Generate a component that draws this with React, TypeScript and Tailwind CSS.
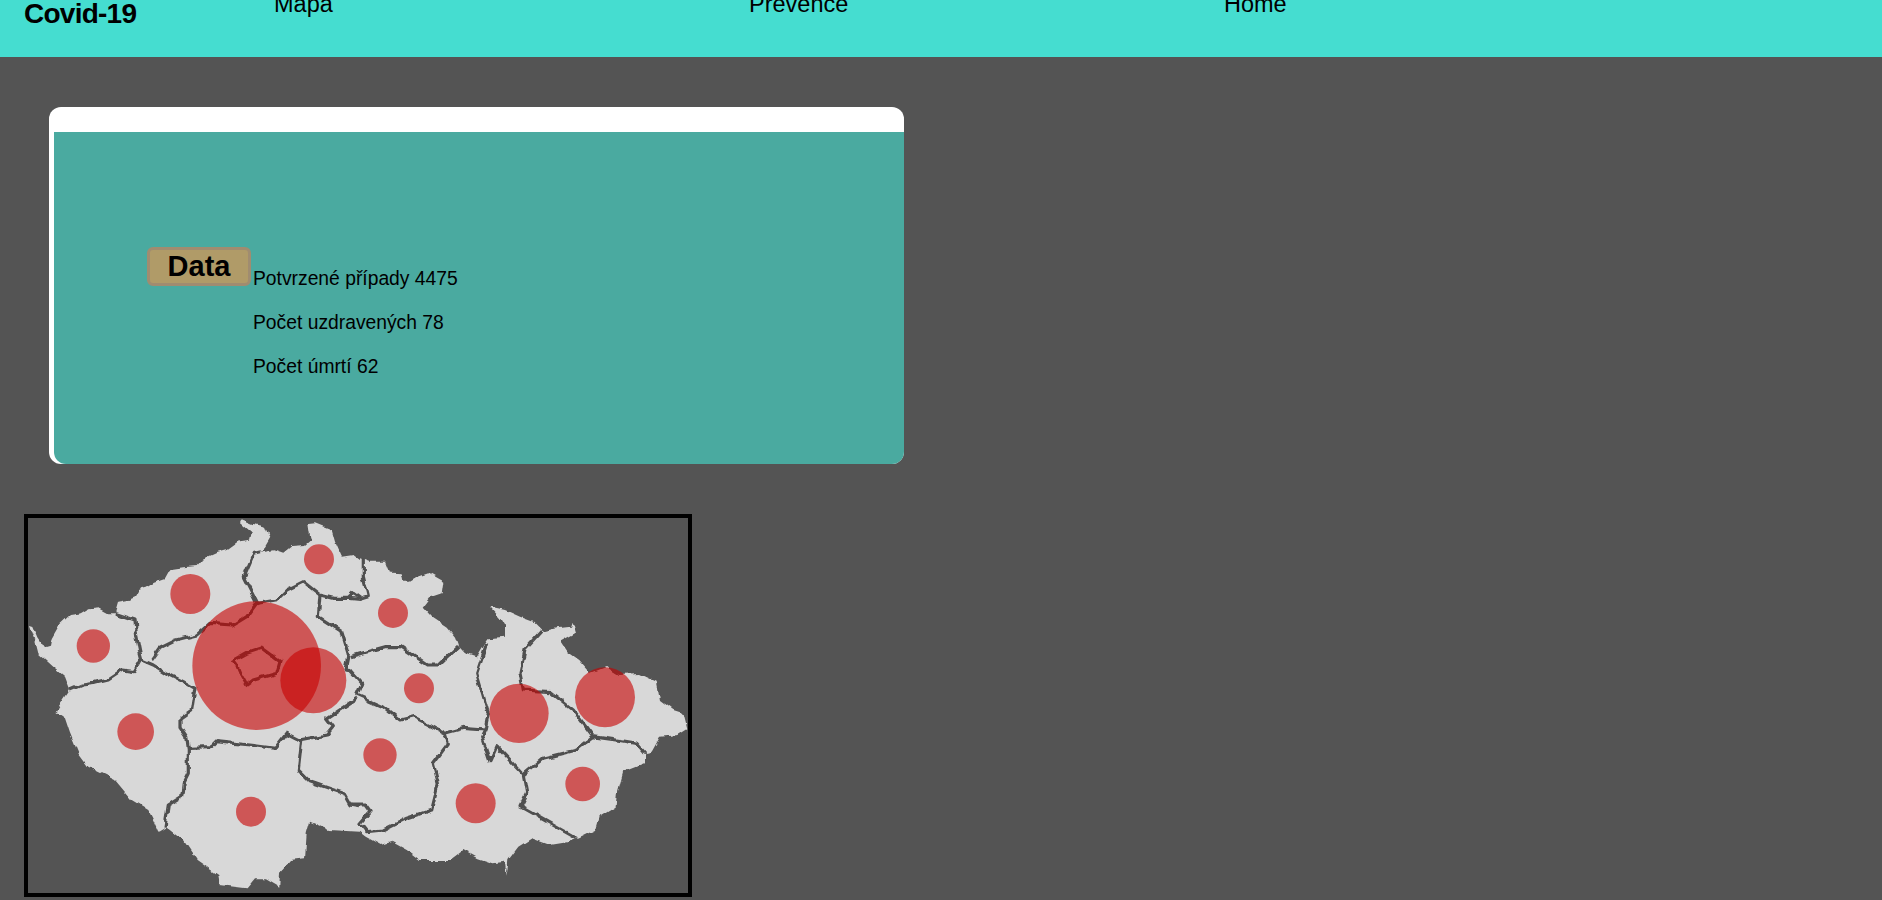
const west = (pts: number[][]) => pts.map(([x, y]) => [x / 3 + 20, y / 3 + 510]);
const east = (pts: number[][]) => pts.map(([x, y]) => [x / 3 + 350, y / 3 + 510]);
const toPath = (pts: number[][], close = false) =>
  "M" + pts.map(([x, y]) => `${x.toFixed(1)} ${y.toFixed(1)}`).join("L") + (close ? "Z" : "");

const outline = [
  ...west([[30,345],[40,348],[55,385],[75,415],[90,410],[95,385],[118,345],[150,315],[185,310],[205,298],[235,295],[262,310],[285,310],[295,275],[325,270],[345,262],[360,235],[385,228],[405,215],[435,205],[450,178],[490,172],[530,168],[548,148],[590,128],[620,120],[650,98],[690,92],[695,70],[660,40],[665,28],[700,42],[735,50],[745,75],[750,85],[735,110],[720,125],[760,118],[790,128],[815,108],[855,105],[872,90],[865,42],[885,40],[935,60],[945,95],[965,140],[1000,135],[1020,150]]),
  ...east([[30,145],[60,155],[105,155],[118,188],[155,190],[160,215],[180,215],[205,200],[235,190],[280,215],[275,250],[240,262],[218,290],[245,320],[290,350],[315,380],[325,408],[345,430],[380,442],[405,400],[415,385],[465,380],[465,350],[450,325],[420,290],[465,300],[510,320],[550,335],[580,365],[620,355],[660,350],[665,335],[675,370],[630,395],[650,425],[685,450],[720,490],[770,470],[810,495],[870,492],[920,515],[930,570],[970,600],[1000,610],[1012,658],[985,675],[930,680],[905,725],[885,730],[885,760],[820,785],[805,840],[800,890],[745,925],[735,960],[685,985],[660,995],[600,1005],[545,985],[505,1010],[475,1050],[470,1100],[465,1055],[430,1060],[385,1045],[340,1020],[300,1050],[210,1050],[170,1020],[125,995],[95,1005],[50,980],[30,965]]),
  ...west([[930,960],[870,935],[860,970],[855,1045],[810,1050],[780,1085],[778,1130],[735,1105],[705,1105],[680,1135],[600,1125],[595,1095],[530,1050],[490,990],[440,950],[415,965],[400,930],[385,900],[335,870],[285,810],[235,785],[205,770],[175,730],[150,670],[135,625],[108,605],[130,570],[150,540],[135,500],[100,470],[55,430],[45,390]]),
];

const borders = [
  west([[285,310],[345,330],[350,380],[360,430],[365,450],[345,485],[310,480],[265,510],[225,520],[185,525],[150,540]]),
  west([[365,450],[400,465],[440,490],[490,515],[525,535],[515,600],[480,625],[480,650],[500,680],[505,715],[505,790],[490,820],[485,860],[445,885],[435,950]]),
  west([[395,450],[420,415],[470,390],[530,375],[570,340],[640,345],[680,320],[710,280],[670,200],[700,130],[720,125]]),
  west([[505,712],[575,710],[590,695],[640,700],[690,705],[765,715],[800,670],[840,690],[920,675],[940,650],[920,625],[1010,565]]),
  west([[710,280],[770,270],[800,240],[850,215],[900,255],[940,265],[985,265],[1000,250],[1020,265]]),
  west([[900,255],[895,320],[965,365],[985,430],[975,480],[990,482]]),
  west([[845,690],[835,780],[870,815],[970,850],[990,885],[1020,890]]),
  east([[0,440],[50,425],[105,410],[150,410],[230,465],[265,465],[325,408]]),
  east([[40,145],[40,200],[55,260],[30,268],[0,265]]),
  east([[0,480],[35,520],[20,555],[100,590],[150,630],[190,620],[285,670],[340,655],[405,660],[415,610],[380,490],[410,400]]),
  east([[285,670],[295,700],[250,760],[265,820],[245,900],[170,925],[100,960],[50,965],[30,940],[60,905],[45,885],[0,885]]),
  east([[405,660],[395,680],[420,755],[440,710],[520,795],[580,745],[680,720],[730,680]]),
  east([[575,365],[525,420],[510,490],[520,540],[600,545],[670,600],[730,680],[800,690],[860,700],[885,730]]),
  east([[520,795],[530,850],[510,890],[600,940],[680,985]]),
];

const prague = west([[640,452],[680,430],[725,415],[780,455],[770,490],[700,510],[680,525],[660,490],[650,465]]);

const dots = [
  ...west([[220,408],[511,252],[897,148],[710,467],[880,511],[347,665],[693,905]]).map(([x, y], i) => ({ x, y, r: [50,60,45,193,99,55,45][i] / 3 })),
  ...east([[129,309],[207,535],[90,735],[377,880],[507,610],[765,562],[698,822]]).map(([x, y], i) => ({ x, y, r: [45,45,50,60,89,90,52][i] / 3 })),
];

function CzechMap() {
  return (
    <svg viewBox="28 518 660 375" className="block w-[660px] h-[375px]">
      <defs>
        {/* roughens the straight segments into a hand-traced border */}
        <filter id="rough" filterUnits="userSpaceOnUse" x="28" y="518" width="660" height="375">
          <feTurbulence type="fractalNoise" baseFrequency="0.09" numOctaves="2" seed="4" />
          <feDisplacementMap in="SourceGraphic" scale="6" xChannelSelector="R" yChannelSelector="G" />
          <feGaussianBlur stdDeviation="0.5" />
        </filter>
      </defs>
      <g filter="url(#rough)">
        <path d={toPath(outline, true)} fill="#d8d8d8" />
        {borders.map((b, i) => (
          <path key={i} d={toPath(b)} fill="none" stroke="#505050" strokeWidth="3.2" strokeLinejoin="round" />
        ))}
        <path d={toPath(prague, true)} fill="none" stroke="#505050" strokeWidth="3.2" />
      </g>
      {dots.map((d, i) => (
        <circle key={i} cx={d.x} cy={d.y} r={d.r} fill="rgba(200,0,0,0.6)" />
      ))}
    </svg>
  );
}

export default function App() {
  const stats = ["Potvrzené případy 4475", "Počet uzdravených 78", "Počet úmrtí 62"];

  return (
    <div className="min-h-screen h-[900px] overflow-hidden bg-[#545454] text-black font-['Liberation_Sans',Arial,sans-serif]">
      {/* header */}
      <header className="flex h-[57px] overflow-hidden bg-[#45ddd0]">
        <div className="ml-[24px] mt-[1px] w-[250px] text-[28px] font-bold leading-[26px] tracking-[-0.75px]">Covid-19</div>
        <nav className="-mt-[9px] flex text-[23.5px] leading-[26px]">
          <a className="w-[475px]">Mapa</a>
          <a className="w-[475px]">Prevence</a>
          <a className="w-[475px]">Home</a>
        </nav>
      </header>

      {/* data card */}
      <section className="ml-[49px] mt-[50px] w-[855px] rounded-[12px] bg-white pl-[5px] pt-[25px]">
        <div className="flex h-[332px] rounded-bl-[12px] rounded-br-[12px] bg-[#4aaaa0] pl-[93px] pt-[115px]">
          <div className="h-[39px] w-[104px] rounded-[6px] border-[3px] border-[#a08c70] bg-[#b09b68] text-center text-[29px] font-bold leading-[33px]">
            Data
          </div>
          <ul className="ml-[2px] mt-[19px] flex flex-col gap-[18px] text-[19.3px] leading-[26px]">
            {stats.map((s) => (
              <li key={s}>{s}</li>
            ))}
          </ul>
        </div>
      </section>

      {/* map */}
      <div className="ml-[24px] mt-[50px] w-[668px] border-4 border-black">
        <CzechMap />
      </div>
    </div>
  );
}
